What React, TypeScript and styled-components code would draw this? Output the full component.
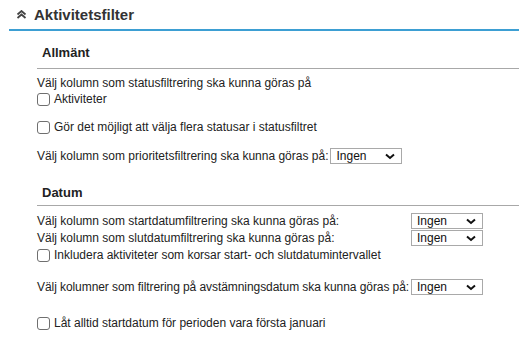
import styled, { createGlobalStyle } from "styled-components";

const GlobalStyle = createGlobalStyle`
  html, body {
    margin: 0;
    padding: 0;
    background: #ffffff;
  }
  body {
    font-family: "Liberation Sans", Arial, sans-serif;
    font-size: 12px;
    color: #222222;
  }
`;

const Panel = styled.div`
  padding-left: 9px;
  width: 510px;
`;

const Header = styled.div`
  display: flex;
  align-items: center;
  height: 29px;
  border-bottom: 2px solid #3d9fd3;
`;

const Collapse = styled.span`
  display: flex;
  align-items: center;
  justify-content: center;
  width: 25px;
`;

const Title = styled.h1`
  margin: 0;
  font-size: 15px;
  font-weight: bold;
  color: #333333;
  line-height: 28px;
`;

const Body = styled.div`
  padding-left: 28px;
`;

const SectionHeading = styled.h2<{ $top: number; $bottom: number }>`
  margin: ${(p) => p.$top}px 0 0;
  padding: 0 0 ${(p) => p.$bottom}px 5px;
  font-size: 13px;
  line-height: 16px;
  font-weight: bold;
  color: #222222;
  border-bottom: 1px solid #a8a8a8;
`;

const Text = styled.div<{ $gap?: number; $tight?: boolean }>`
  margin-top: ${(p) => p.$gap ?? 0}px;
  line-height: 16px;
  white-space: nowrap;
  letter-spacing: ${(p) => (p.$tight ? "-0.07px" : "normal")};
`;

const CheckRow = styled.label<{ $gap?: number }>`
  display: flex;
  align-items: center;
  gap: 4px;
  margin-top: ${(p) => p.$gap ?? 0}px;
  line-height: 16px;
`;

const Box = styled.input.attrs({ type: "checkbox" })`
  appearance: none;
  box-sizing: border-box;
  margin: 0;
  width: 13px;
  height: 13px;
  border: 1px solid #6f6f6f;
  border-radius: 3px;
  background: #ffffff;
`;

const InlineRow = styled.div<{ $gap?: number }>`
  display: flex;
  align-items: center;
  gap: 2px;
  margin-top: ${(p) => p.$gap ?? 0}px;
  line-height: 16px;
`;

const Select = styled.div<{ $gap?: number }>`
  box-sizing: border-box;
  display: flex;
  align-items: center;
  justify-content: space-between;
  width: 72px;
  height: 16px;
  margin-top: ${(p) => p.$gap ?? 0}px;
  padding: 0 6px 0 5px;
  border: 1px solid #a9a9a9;
  background: #ffffff;
  line-height: 14px;
  color: #111111;
`;

const DateGrid = styled.div`
  display: grid;
  grid-template-columns: 374px auto;
  align-items: center;
  row-gap: 1px;
  margin-top: 7px;
`;

const Wide = styled.div<{ $gap?: number }>`
  grid-column: 1 / -1;
  margin-top: ${(p) => p.$gap ?? 0}px;
`;

function Dropdown({ gap }: { gap?: number }) {
  return (
    <Select $gap={gap}>
      <span>Ingen</span>
      <svg width="10" height="7" viewBox="0 0 10 7">
        <path d="M1 1.5 L5 5 L9 1.5" fill="none" stroke="#111" strokeWidth="2" />
      </svg>
    </Select>
  );
}

function Check({ label, gap }: { label: string; gap?: number }) {
  return (
    <CheckRow $gap={gap}>
      <Box />
      <span>{label}</span>
    </CheckRow>
  );
}

export default function App() {
  return (
    <>
      <GlobalStyle />
      <Panel>
        <Header>
          <Collapse>
            <svg width="11" height="9" viewBox="0 0 11 9">
              <path
                d="M1.5 4.5 L5.5 1 L9.5 4.5 M1.5 8 L5.5 4.5 L9.5 8"
                fill="none"
                stroke="#444"
                strokeWidth="1.8"
              />
            </svg>
          </Collapse>
          <Title>Aktivitetsfilter</Title>
        </Header>
        <Body>
          <SectionHeading $top={14} $bottom={7}>
            Allmänt
          </SectionHeading>
          <Text $gap={6}>Välj kolumn som statusfiltrering ska kunna göras på</Text>
          <Check label="Aktiviteter" />
          <Check gap={12} label="Gör det möjligt att välja flera statusar i statusfiltret" />
          <InlineRow $gap={13}>
            <span>Välj kolumn som prioritetsfiltrering ska kunna göras på:</span>
            <Dropdown />
          </InlineRow>
          <SectionHeading $top={21} $bottom={4}>
            Datum
          </SectionHeading>
          <DateGrid>
            <Text>Välj kolumn som startdatumfiltrering ska kunna göras på:</Text>
            <Dropdown />
            <Text>Välj kolumn som slutdatumfiltrering ska kunna göras på:</Text>
            <Dropdown />
            <Wide>
              <Check label="Inkludera aktiviteter som korsar start- och slutdatumintervallet" />
            </Wide>
            <Text $gap={15} $tight>
              Välj kolumner som filtrering på avstämningsdatum ska kunna göras på:
            </Text>
            <Dropdown gap={15} />
            <Wide $gap={19}>
              <Check label="Låt alltid startdatum för perioden vara första januari" />
            </Wide>
          </DateGrid>
        </Body>
      </Panel>
    </>
  );
}
